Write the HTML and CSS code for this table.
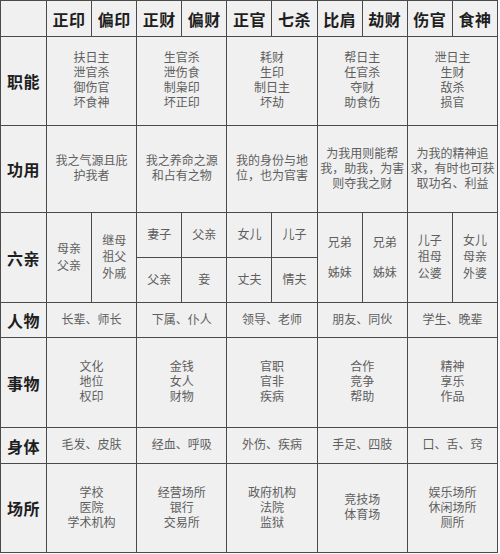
FILE: index.html
```html
<!DOCTYPE html>
<html lang="zh">
<head>
<meta charset="utf-8">
<title>十神</title>
<link rel="stylesheet" href="styles.css">
</head>
<body>
<div class="table">
  <div class="cell"></div>
  <div class="cell head">正印</div>
  <div class="cell head">偏印</div>
  <div class="cell head">正财</div>
  <div class="cell head">偏财</div>
  <div class="cell head">正官</div>
  <div class="cell head">七杀</div>
  <div class="cell head">比肩</div>
  <div class="cell head">劫财</div>
  <div class="cell head">伤官</div>
  <div class="cell head">食神</div>

  <div class="cell label">职能</div>
  <div class="cell txt span2">扶日主<br>泄官杀<br>御伤官<br>坏食神</div>
  <div class="cell txt span2">生官杀<br>泄伤食<br>制枭印<br>坏正印</div>
  <div class="cell txt span2">耗财<br>生印<br>制日主<br>坏劫</div>
  <div class="cell txt span2">帮日主<br>任官杀<br>夺财<br>助食伤</div>
  <div class="cell txt span2">泄日主<br>生财<br>敌杀<br>损官</div>

  <div class="cell label">功用</div>
  <div class="cell txt span2">我之气源且庇<br>护我者</div>
  <div class="cell txt span2">我之养命之源<br>和占有之物</div>
  <div class="cell txt span2">我的身份与地<br>位，也为官害</div>
  <div class="cell txt span2">为我用则能帮<br>我，助我，为害<br>则夺我之财</div>
  <div class="cell txt span2">为我的精神追<br>求，有时也可获<br>取功名、利益</div>

  <div class="cell label rspan2">六亲</div>
  <div class="cell txt tall rspan2">母亲<br>父亲</div>
  <div class="cell txt tall rspan2">继母<br>祖父<br>外戚</div>
  <div class="cell txt">妻子</div>
  <div class="cell txt">父亲</div>
  <div class="cell txt">女儿</div>
  <div class="cell txt">儿子</div>
  <div class="cell txt wide rspan2">兄弟<br>姊妹</div>
  <div class="cell txt wide rspan2">兄弟<br>姊妹</div>
  <div class="cell txt tall rspan2">儿子<br>祖母<br>公婆</div>
  <div class="cell txt tall rspan2">女儿<br>母亲<br>外婆</div>
  <div class="cell txt">父亲</div>
  <div class="cell txt">妾</div>
  <div class="cell txt">丈夫</div>
  <div class="cell txt">情夫</div>

  <div class="cell label">人物</div>
  <div class="cell txt span2">长辈、师长</div>
  <div class="cell txt span2">下属、仆人</div>
  <div class="cell txt span2">领导、老师</div>
  <div class="cell txt span2">朋友、同伙</div>
  <div class="cell txt span2">学生、晚辈</div>

  <div class="cell label">事物</div>
  <div class="cell txt span2">文化<br>地位<br>权印</div>
  <div class="cell txt span2">金钱<br>女人<br>财物</div>
  <div class="cell txt span2">官职<br>官非<br>疾病</div>
  <div class="cell txt span2">合作<br>竞争<br>帮助</div>
  <div class="cell txt span2">精神<br>享乐<br>作品</div>

  <div class="cell label">身体</div>
  <div class="cell txt span2">毛发、皮肤</div>
  <div class="cell txt span2">经血、呼吸</div>
  <div class="cell txt span2">外伤、疾病</div>
  <div class="cell txt span2">手足、四肢</div>
  <div class="cell txt span2">口、舌、窍</div>

  <div class="cell label">场所</div>
  <div class="cell txt span2">学校<br>医院<br>学术机构</div>
  <div class="cell txt span2">经营场所<br>银行<br>交易所</div>
  <div class="cell txt span2">政府机构<br>法院<br>监狱</div>
  <div class="cell txt span2">竞技场<br>体育场</div>
  <div class="cell txt span2">娱乐场所<br>休闲场所<br>厕所</div>
</div>
</body>
</html>
```

FILE: styles.css
```css
html, body {
  margin: 0;
  padding: 0;
  background: #fbfbfb;
}

.table {
  width: 498px;
  box-sizing: border-box;
  display: grid;
  grid-template-columns: 45px repeat(10, 1fr);
  grid-template-rows: 35px 88px 86px 44px 44px 34px 89px 35px 88px;
  gap: 1px;
  padding: 1px;
  background: #4a4a4a;
  font-family: "Noto Sans CJK SC", "Noto Sans", sans-serif;
}

.cell {
  background: #f0f0f0;
  display: flex;
  align-items: center;
  justify-content: center;
  text-align: center;
  overflow: hidden;
}

.head,
.label {
  font-size: 16px;
  font-weight: 700;
  color: #1e1e1e;
  letter-spacing: 0.5px;
}

.txt {
  font-family: "Liberation Serif", "Noto Sans CJK SC", serif;
  font-size: 12px;
  line-height: 15px;
  color: #5e5e5e;
  white-space: nowrap;
}

.tall {
  line-height: 16.5px;
}

.wide {
  line-height: 30px;
}

.span2 {
  grid-column: span 2;
}

.rspan2 {
  grid-row: span 2;
}
```
